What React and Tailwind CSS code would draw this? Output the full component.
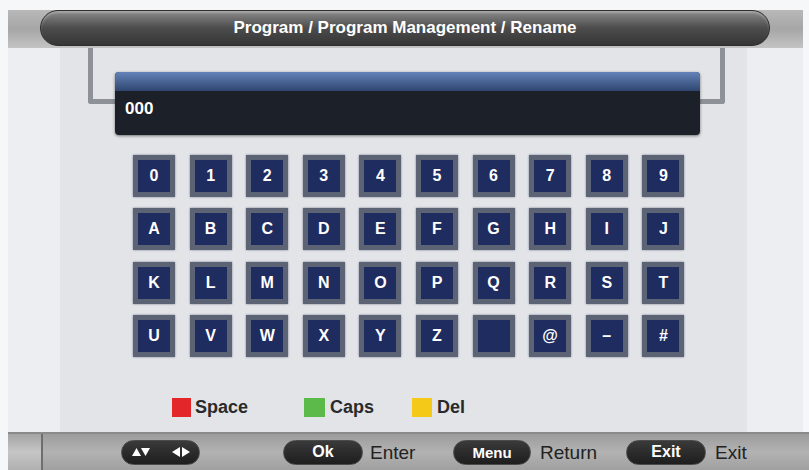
import React from 'react';

const rows = [
  ['0', '1', '2', '3', '4', '5', '6', '7', '8', '9'],
  ['A', 'B', 'C', 'D', 'E', 'F', 'G', 'H', 'I', 'J'],
  ['K', 'L', 'M', 'N', 'O', 'P', 'Q', 'R', 'S', 'T'],
  ['U', 'V', 'W', 'X', 'Y', 'Z', '', '@', '–', '#'],
];

const Key = ({ label }) => (
  <div className="w-[42px] h-[42px] p-[5px] bg-[#5c6374] shadow-[0_0_2px_#7a8090]">
    <div className="w-full h-full bg-[#1f2c5f] flex items-center justify-center text-white font-bold text-[16px] leading-none">
      {label}
    </div>
  </div>
);

const Pill = ({ w, children }) => (
  <div
    className={`${w} h-[25px] rounded-full bg-gradient-to-b from-[#3a3a3a] to-[#1e1e1e] border border-[#4a4a4a] flex items-center justify-center text-white font-bold text-[16px] leading-none`}
  >
    {children}
  </div>
);

const Arrows = () => (
  <svg width="58" height="12" viewBox="0 0 58 12">
    <polygon points="0,10 4.5,2 9,10" fill="#fff" />
    <polygon points="9,2 18,2 13.5,10" fill="#fff" />
    <polygon points="40,6 48,1 48,11" fill="#fff" />
    <polygon points="50,1 50,11 58,6" fill="#fff" />
  </svg>
);

const App = () => {
  return (
    <div
      className="w-[809px] h-[470px] bg-[#f6f7f8] overflow-hidden flex flex-col"
      style={{ fontFamily: '"Liberation Sans", Arial, sans-serif' }}
    >
      {/* title bar */}
      <div className="h-[48px] pt-[10px] flex">
        <div className="ml-[8px] w-[795px] h-[38px] bg-gradient-to-b from-[#b8b8b8] via-[#a6a6a6] to-[#c4c4c4] flex">
          <div className="ml-[32px] w-[730px] h-[36px] rounded-full bg-gradient-to-b from-[#8c8c8c] via-[#4c4c4c] to-[#363636] border border-[#2e2e2e] shadow-[inset_0_2px_2px_rgba(255,255,255,0.25)] flex items-center justify-center">
            <span className="text-white font-bold text-[17px]">
              Program / Program Management / Rename
            </span>
          </div>
        </div>
      </div>

      {/* body */}
      <div className="flex h-[384px]">
        <div className="w-[8px] bg-[#f6f7f8]" />
        <div className="w-[52px] bg-[#eceef1]" />
        <div className="w-[687px] bg-[#e2e4e8] flex flex-col">
          <div className="ml-[28px] w-[637px] h-[56px] border-x-[5px] border-b-[5px] border-[#8e9298] rounded-b-[3px]" />
          <div className="ml-[55px] w-[585px] h-[63px] -mt-[32px] rounded-[4px] bg-[#1c2029] shadow-[0_1px_3px_rgba(0,0,0,0.5)] overflow-hidden flex flex-col">
            <div className="h-[19px] bg-gradient-to-b from-[#6584ba] to-[#2f4670]" />
            <div className="flex-1 flex items-center pl-[10px] -mt-[8px] text-white font-bold text-[17px]">
              000
            </div>
          </div>

          <div className="ml-[73px] mt-[20px] flex flex-col gap-y-[11.3px]">
            {rows.map((row, i) => (
              <div key={i} className="flex gap-x-[14.6px]">
                {row.map((k, j) => (
                  <Key key={j} label={k} />
                ))}
              </div>
            ))}
          </div>

          <div className="mt-[41px] ml-[112px] flex items-center h-[19px] text-[18px] font-bold text-[#2a2a2a]">
            <div className="w-[19px] h-[19px] bg-[#e3262a]" />
            <span className="ml-[4px] w-[109px]">Space</span>
            <div className="w-[21px] h-[19px] bg-[#5cba4a]" />
            <span className="ml-[5px] w-[82px]">Caps</span>
            <div className="w-[20px] h-[19px] bg-[#f5c918]" />
            <span className="ml-[5px]">Del</span>
          </div>
        </div>
        <div className="w-[56px] bg-[#eceef1]" />
        <div className="w-[6px] bg-[#f6f7f8]" />
      </div>

      {/* bottom bar */}
      <div className="h-[38px] flex">
        <div className="w-[8px] bg-[#f6f7f8]" />
        <div className="w-[801px] h-full border-t-[2px] border-[#8a8a8a] bg-gradient-to-b from-[#9c9c9c] via-[#b2b2b2] to-[#a0a0a0] flex items-center">
          <div className="w-[35px] h-full bg-gradient-to-b from-[#a4a4a4] via-[#c6c6c6] to-[#b0b0b0] border-r-[2px] border-[#6e6e6e]" />
          <div className="ml-[78px]">
            <Pill w="w-[79px]">
              <Arrows />
            </Pill>
          </div>
          <div className="ml-[83px]">
            <Pill w="w-[80px]">Ok</Pill>
          </div>
          <span className="ml-[7px] w-[46px] text-[19px] text-[#222] leading-none">Enter</span>
          <div className="ml-[37px]">
            <Pill w="w-[78px]">
              <span className="text-[15px]">Menu</span>
            </Pill>
          </div>
          <span className="ml-[9px] w-[58px] text-[19px] text-[#222] leading-none">Return</span>
          <div className="ml-[28px]">
            <Pill w="w-[80px]">Exit</Pill>
          </div>
          <span className="ml-[9px] text-[19px] text-[#222] leading-none">Exit</span>
        </div>
      </div>
    </div>
  );
};

export default App;
